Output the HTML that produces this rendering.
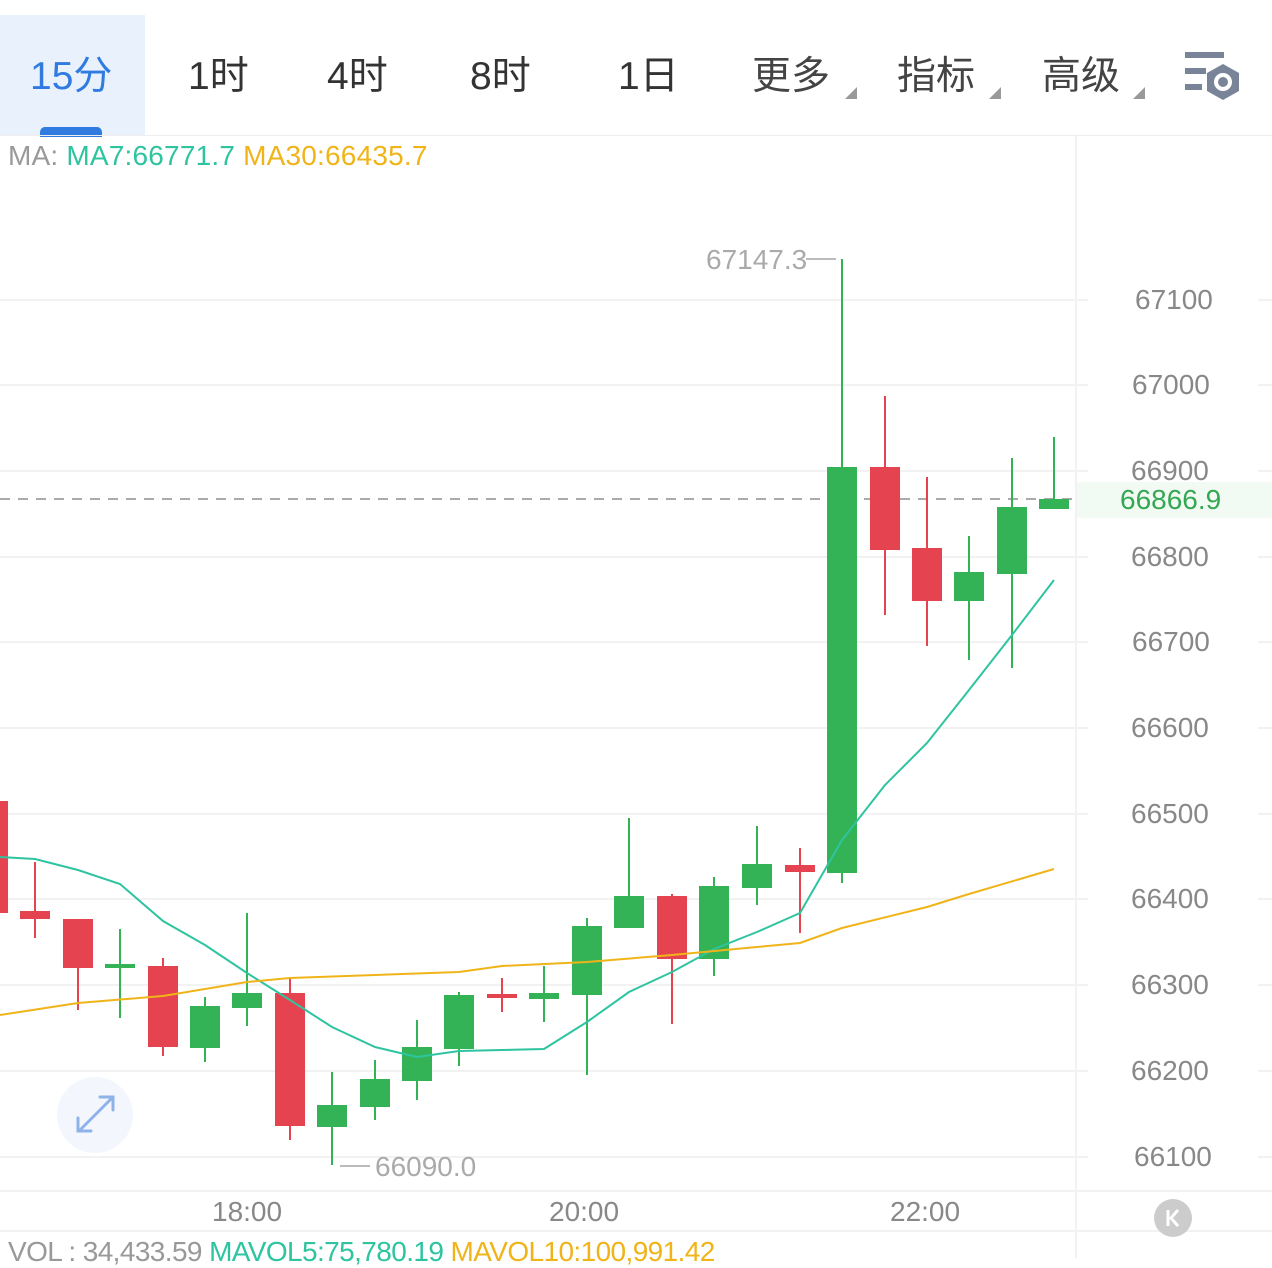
<!DOCTYPE html>
<html><head><meta charset="utf-8"><style>
body{margin:0;width:1272px;height:1258px;overflow:hidden;background:#fff;font-family:"Liberation Sans","Noto Sans CJK SC",sans-serif;position:relative}
.tab{position:absolute;top:52px;font-size:39px;color:#333;line-height:50px}
.arr{position:absolute;width:0;height:0;border-left:12px solid transparent;border-bottom:12px solid #999;top:87px}
.t{position:absolute;font-size:28px;color:#888;line-height:32px}
</style></head><body>
<div style="position:absolute;left:0;top:15px;width:145px;height:120px;background:#e8f1fc"></div>
<div style="position:absolute;left:40px;top:127px;width:62px;height:10px;background:#2f7be0;border-radius:5px 5px 0 0"></div>
<div style="position:absolute;left:0;top:135px;width:1272px;height:1px;background:#eee"></div>
<div class="tab" style="left:30px;color:#2f7be0">15分</div>
<div class="tab" style="left:188px">1时</div>
<div class="tab" style="left:327px">4时</div>
<div class="tab" style="left:470px">8时</div>
<div class="tab" style="left:618px">1日</div>
<div class="tab" style="left:752px;color:#444">更多</div><div class="arr" style="left:845px"></div>
<div class="tab" style="left:897px;color:#444">指标</div><div class="arr" style="left:989px"></div>
<div class="tab" style="left:1042px;color:#444">高级</div><div class="arr" style="left:1133px"></div>
<svg style="position:absolute;left:1180px;top:48px" width="64" height="60" viewBox="1180 48 64 60">
<rect x="1185" y="52" width="39" height="6" fill="#7a8499"/>
<rect x="1185" y="68" width="21" height="6" fill="#7a8499"/>
<rect x="1185" y="84" width="17" height="6" fill="#7a8499"/>
<polygon points="1223,64 1239,73 1239,91 1223,100 1207,91 1207,73" fill="#7a8499"/>
<circle cx="1223" cy="82" r="9" fill="#fff"/><circle cx="1223" cy="82" r="5" fill="#7a8499"/>
</svg>
<div class="t" style="left:8px;top:140px;font-size:28px;letter-spacing:0.2px"><span style="color:#999">MA: </span><span style="color:#2ec4a0">MA7:66771.7</span> <span style="color:#f0b419">MA30:66435.7</span></div>
<svg style="position:absolute;left:0;top:0" width="1272" height="1258">
<g stroke="#f2f2f2" stroke-width="2">
<line x1="0" y1="300" x2="1088" y2="300"/><line x1="0" y1="385" x2="1088" y2="385"/><line x1="0" y1="471" x2="1088" y2="471"/><line x1="0" y1="557" x2="1088" y2="557"/><line x1="0" y1="642" x2="1088" y2="642"/><line x1="0" y1="728" x2="1088" y2="728"/><line x1="0" y1="814" x2="1088" y2="814"/><line x1="0" y1="899" x2="1088" y2="899"/><line x1="0" y1="985" x2="1088" y2="985"/><line x1="0" y1="1071" x2="1088" y2="1071"/><line x1="0" y1="1157" x2="1088" y2="1157"/>
<line x1="1258" y1="300" x2="1272" y2="300"/><line x1="1258" y1="385" x2="1272" y2="385"/><line x1="1258" y1="471" x2="1272" y2="471"/><line x1="1258" y1="557" x2="1272" y2="557"/><line x1="1258" y1="642" x2="1272" y2="642"/><line x1="1258" y1="728" x2="1272" y2="728"/><line x1="1258" y1="814" x2="1272" y2="814"/><line x1="1258" y1="899" x2="1272" y2="899"/><line x1="1258" y1="985" x2="1272" y2="985"/><line x1="1258" y1="1071" x2="1272" y2="1071"/><line x1="1258" y1="1157" x2="1272" y2="1157"/>
<line x1="1076" y1="136" x2="1076" y2="1258"/>
<line x1="0" y1="1191" x2="1272" y2="1191"/><line x1="0" y1="1231" x2="1272" y2="1231"/>
</g>
<rect x="1077" y="482" width="195" height="36" fill="#f2faf4"/>
<line x1="0" y1="499" x2="1076" y2="499" stroke="#aaa" stroke-width="2" stroke-dasharray="10,8"/>
<g stroke-width="2">
<g stroke="#e5434f" fill="#e5434f">
<rect x="-10" y="802" width="17" height="110"/>
<line x1="35" y1="862" x2="35" y2="938"/><rect x="21" y="912" width="28" height="6"/>
<line x1="78" y1="920" x2="78" y2="1010"/><rect x="64" y="920" width="28" height="47"/>
<line x1="163" y1="958" x2="163" y2="1056"/><rect x="149" y="967" width="28" height="79"/>
<line x1="290" y1="977" x2="290" y2="1140"/><rect x="276" y="994" width="28" height="131"/>
<line x1="502" y1="978" x2="502" y2="1012"/><rect x="488" y="995" width="28" height="2"/>
<line x1="672" y1="894" x2="672" y2="1024"/><rect x="658" y="897" width="28" height="61"/>
<line x1="800" y1="848" x2="800" y2="933"/><rect x="786" y="866" width="28" height="5"/>
<line x1="885" y1="396" x2="885" y2="615"/><rect x="871" y="468" width="28" height="81"/>
<line x1="927" y1="477" x2="927" y2="646"/><rect x="913" y="549" width="28" height="51"/>
</g>
<g stroke="#34b256" fill="#34b256">
<line x1="120" y1="929" x2="120" y2="1018"/><rect x="106" y="965" width="28" height="2"/>
<line x1="205" y1="997" x2="205" y2="1062"/><rect x="191" y="1007" width="28" height="40"/>
<line x1="247" y1="913" x2="247" y2="1026"/><rect x="233" y="994" width="28" height="13"/>
<line x1="332" y1="1072" x2="332" y2="1165"/><rect x="318" y="1106" width="28" height="20"/>
<line x1="375" y1="1060" x2="375" y2="1120"/><rect x="361" y="1080" width="28" height="26"/>
<line x1="417" y1="1020" x2="417" y2="1100"/><rect x="403" y="1048" width="28" height="32"/>
<line x1="459" y1="992" x2="459" y2="1066"/><rect x="445" y="996" width="28" height="52"/>
<line x1="544" y1="966" x2="544" y2="1022"/><rect x="530" y="994" width="28" height="4"/>
<line x1="587" y1="918" x2="587" y2="1075"/><rect x="573" y="927" width="28" height="67"/>
<line x1="629" y1="818" x2="629" y2="927"/><rect x="615" y="897" width="28" height="30"/>
<line x1="714" y1="877" x2="714" y2="976"/><rect x="700" y="887" width="28" height="71"/>
<line x1="757" y1="826" x2="757" y2="905"/><rect x="743" y="865" width="28" height="22"/>
<line x1="842" y1="259" x2="842" y2="883"/><rect x="828" y="468" width="28" height="404"/>
<line x1="969" y1="536" x2="969" y2="660"/><rect x="955" y="573" width="28" height="27"/>
<line x1="1012" y1="458" x2="1012" y2="668"/><rect x="998" y="508" width="28" height="65"/>
<line x1="1054" y1="437" x2="1054" y2="508"/><rect x="1040" y="500" width="28" height="8"/>
</g>
</g>
<polyline fill="none" stroke="#2ec4a0" stroke-width="2" points="0,857 35,859 78,870 120,884 163,921 205,945 247,973 290,1000 332,1027 375,1047 417,1057 459,1051 502,1050 544,1049 587,1022 629,992 672,972 714,949 757,932 800,913 842,840 885,785 927,743 969,690 1012,635 1054,580"/>
<polyline fill="none" stroke="#f0b419" stroke-width="2" points="0,1015 78,1003 163,996 247,982 290,978 375,975 459,972 502,966 587,962 672,955 757,947 800,943 842,928 927,907 969,894 1054,869"/>
<line x1="806" y1="259" x2="836" y2="259" stroke="#bbb" stroke-width="2"/>
<line x1="340" y1="1166" x2="370" y2="1166" stroke="#bbb" stroke-width="2"/>
<circle cx="95" cy="1115" r="38" fill="#f3f7fd"/>
<g stroke="#8fb3e8" stroke-width="3" fill="none" stroke-linecap="round">
<line x1="80" y1="1130" x2="112" y2="1098"/><polyline points="100,1097 113,1097 113,1110"/><polyline points="78,1118 78,1131 91,1131"/>
</g>
<circle cx="1173" cy="1218" r="19" fill="#ccc"/>
<path d="M1168 1210 V1226 M1178 1210 L1171 1218 L1178 1226" stroke="#fff" stroke-width="3" fill="none"/>
</svg>
<div class="t" style="left:706px;top:244px;color:#aaa">67147.3</div>
<div class="t" style="left:375px;top:1151px;color:#aaa">66090.0</div>
<div class="t" style="left:1135px;top:284px">67100</div>
<div class="t" style="left:1132px;top:369px">67000</div>
<div class="t" style="left:1131px;top:455px">66900</div>
<div class="t" style="left:1120px;top:484px;color:#34a853">66866.9</div>
<div class="t" style="left:1131px;top:541px">66800</div>
<div class="t" style="left:1132px;top:626px">66700</div>
<div class="t" style="left:1131px;top:712px">66600</div>
<div class="t" style="left:1131px;top:798px">66500</div>
<div class="t" style="left:1131px;top:883px">66400</div>
<div class="t" style="left:1131px;top:969px">66300</div>
<div class="t" style="left:1131px;top:1055px">66200</div>
<div class="t" style="left:1134px;top:1141px">66100</div>
<div class="t" style="left:212px;top:1196px">18:00</div>
<div class="t" style="left:549px;top:1196px">20:00</div>
<div class="t" style="left:890px;top:1196px">22:00</div>
<div class="t" style="left:8px;top:1236px;white-space:nowrap;letter-spacing:-0.6px"><span style="color:#999">VOL : 34,433.59 </span><span style="color:#2ec4a0">MAVOL5:75,780.19 </span><span style="color:#f0b419">MAVOL10:100,991.42</span></div>
</body></html>
